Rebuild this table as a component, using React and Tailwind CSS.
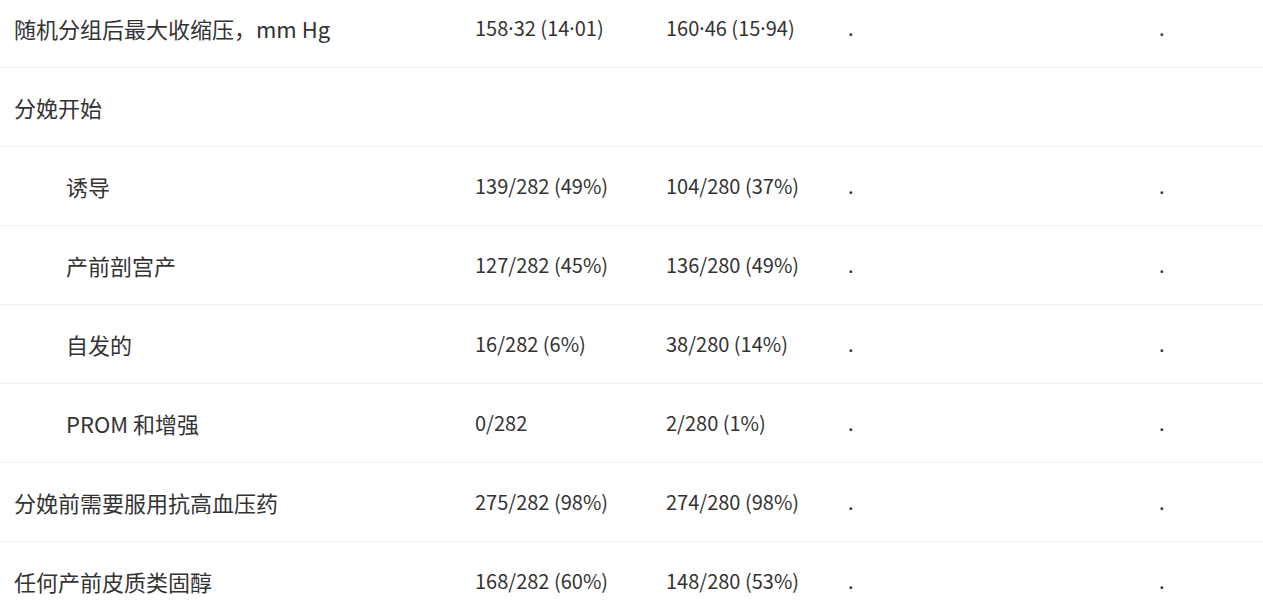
import React from "react";

const rows = [
  { label: "随机分组后最大收缩压，mm Hg", a: "158·32 (14·01)", b: "160·46 (15·94)", dots: true },
  { label: "分娩开始", a: "", b: "", dots: false },
  { label: "诱导", a: "139/282 (49%)", b: "104/280 (37%)", dots: true, sub: true },
  { label: "产前剖宫产", a: "127/282 (45%)", b: "136/280 (49%)", dots: true, sub: true },
  { label: "自发的", a: "16/282 (6%)", b: "38/280 (14%)", dots: true, sub: true },
  { label: "PROM 和增强", a: "0/282", b: "2/280 (1%)", dots: true, sub: true },
  { label: "分娩前需要服用抗高血压药", a: "275/282 (98%)", b: "274/280 (98%)", dots: true },
  { label: "任何产前皮质类固醇", a: "168/282 (60%)", b: "148/280 (53%)", dots: true },
];

// CJK font draws the middle dot full-width, so give it a latin face
const Num = ({ text }) =>
  text.split("·").map((part, i) => (
    <React.Fragment key={i}>
      {i > 0 && <span style={{ fontFamily: '"Noto Sans", sans-serif' }}>·</span>}
      {part}
    </React.Fragment>
  ));

export default function App() {
  return (
    <div
      className="min-h-screen bg-white overflow-hidden text-[#333]"
      style={{ fontFamily: '"Noto Sans CJK SC", "Noto Sans", sans-serif' }}
    >
      <div className="-mt-[11px]">
        {rows.map((r, i) => (
          <div
            key={i}
            className="grid grid-cols-[461px_191px_182px_311px_1fr] items-center h-[79px] border-b border-[#f0f0f0] pl-[14px]"
          >
            <div className={`text-[22px] leading-none ${r.sub ? "pl-[52px]" : ""}`}>
              {r.label}
            </div>
            <div className="text-[20px] leading-none">
              <Num text={r.a} />
            </div>
            <div className="text-[20px] leading-none">
              <Num text={r.b} />
            </div>
            <div className="text-[20px] leading-none">{r.dots ? "." : ""}</div>
            <div className="text-[20px] leading-none">{r.dots ? "." : ""}</div>
          </div>
        ))}
      </div>
    </div>
  );
}
